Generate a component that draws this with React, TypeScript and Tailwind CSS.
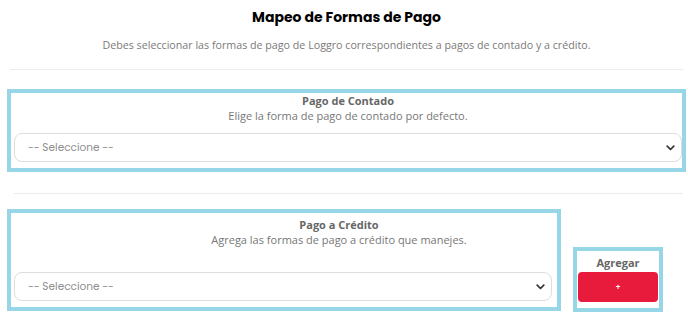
import React from "react";

const Chevron = () => (
  <svg width="9" height="6" viewBox="0 0 9 6" className="shrink-0">
    <path d="M1.2 1.2 L4.5 4.5 L7.8 1.2" fill="none" stroke="#333" strokeWidth="1.7" strokeLinecap="round" strokeLinejoin="round" />
  </svg>
);

const Select = ({ className }: { className: string }) => (
  <div className={`flex items-center justify-between h-[29px] rounded-[8px] border border-[#dedede] bg-white pl-[13px] pr-[6px] ${className}`}>
    <span className="text-[10.5px] leading-[14px] mt-[1px] text-[#8f8f8f]" style={{ fontFamily: "Poppins, 'Lato', sans-serif" }}>-- Seleccione --</span>
    <Chevron />
  </div>
);

export default function App() {
  const body = { fontFamily: "'Open Sans', 'Noto Sans', sans-serif" };
  return (
    <div className="w-[688px] h-[327px] bg-white flex flex-col pl-[7px] pr-[2px] overflow-hidden" style={body}>
      <h1 className="mt-[7px] text-center text-[14px] leading-[20px] font-bold text-black" style={{ fontFamily: "Poppins, Inter, sans-serif" }}>
        Mapeo de Formas de Pago
      </h1>
      <p className="mt-[11px] text-center text-[10.7px] leading-[14px] text-[#7a7a7a]">
        Debes seleccionar las formas de pago de Loggro correspondientes a pagos de contado y a crédito.
      </p>
      <div className="mt-[17px] ml-[3px] mr-[3px] h-px bg-[#ececec]" />
      <div className="mt-[19px] h-[83px] border-4 border-[#97d6e7] flex flex-col pl-[3px] pr-0">
        <div className="text-center text-[11px] leading-[16px] font-bold text-[#666]">Pago de Contado</div>
        <div className="text-center text-[11px] leading-[14px] text-[#777]">Elige la forma de pago de contado por defecto.</div>
        <Select className="mt-[10px]" />
      </div>
      <div className="mt-[21px] ml-[7px] mr-[3px] h-px bg-[#ececec]" />
      <div className="mt-[15px] flex items-start">
        <div className="w-[554px] h-[102px] border-4 border-[#97d6e7] flex flex-col pl-[3px] pr-[5px]">
          <div className="mt-[4px] pl-[112px] text-center text-[11px] leading-[16px] font-bold text-[#666]">Pago a Crédito</div>
          <div className="pl-[112px] text-center text-[11px] leading-[14px] text-[#777] whitespace-nowrap">Agrega las formas de pago a crédito que manejes.</div>
          <Select className="mt-[25px]" />
        </div>
        <div className="ml-[12px] mt-[38px] w-[90px] h-[65px] border-4 border-[#97d6e7] flex flex-col items-center">
          <div className="mt-[5px] text-[11px] leading-[14px] font-bold text-[#666]">Agregar</div>
          <button className="mt-[2px] w-[80px] h-[30px] rounded-[4px] bg-[#e91b3d] flex items-center justify-center text-white text-[8px] font-bold leading-none">
            +
          </button>
        </div>
      </div>
    </div>
  );
}
